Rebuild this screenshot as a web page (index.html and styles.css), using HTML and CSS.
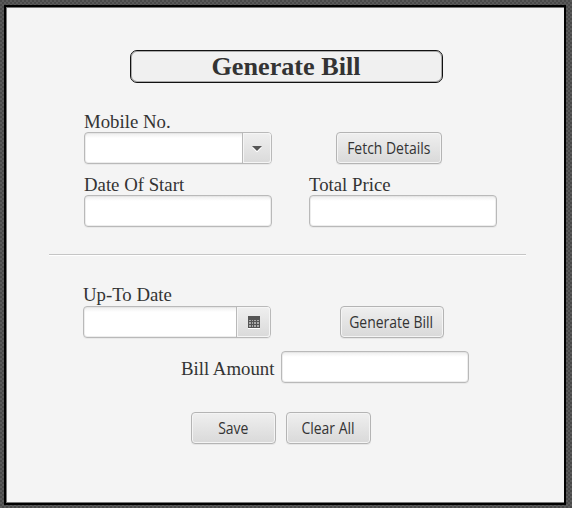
FILE: index.html
```html
<!DOCTYPE html>
<html lang="en">
<head>
<meta charset="utf-8">
<title>Generate Bill</title>
<link rel="stylesheet" href="styles.css">
</head>
<body>
<main class="window">
  <h1 class="title"><span>Generate Bill</span></h1>
  <section class="customer">
    <div class="field">
      <label for="mobile">Mobile No.</label>
      <div class="combo">
        <input id="mobile" class="combo-input" type="text">
        <button class="arrow" aria-label="Open list"><svg width="10" height="6" viewBox="0 0 10 6"><path d="M0 1.5h10L5 6.5z" fill="#fff"/><path d="M0 0h10L5 5z" fill="#555"/></svg></button>
      </div>
    </div>
    <button class="button fetch"><span>Fetch Details</span></button>
    <div class="field">
      <label for="start">Date Of Start</label>
      <input id="start" class="input" type="text">
    </div>
    <div class="field">
      <label for="price">Total Price</label>
      <input id="price" class="input" type="text">
    </div>
  </section>
  <hr class="separator">
  <section class="billing">
    <div class="field">
      <label for="upto">Up-To Date</label>
      <div class="combo">
        <input id="upto" class="combo-input" type="text">
        <button class="calendar" aria-label="Pick date"><svg width="12" height="13" viewBox="0 0 12 13" shape-rendering="crispEdges"><path d="M0 12h12v1H0z" fill="#fff"/><path d="M0 0h12v12H0z" fill="#555"/><path d="M1 4h2v1H1zM4 4h1v1H4zM6 4h2v1H6zM9 4h2v1H9zM1 6h2v2H1zM4 6h1v2H4zM6 6h2v2H6zM9 6h2v2H9zM1 9h2v2H1zM4 9h1v2H4zM6 9h2v2H6zM9 9h2v2H9z" fill="#aaa"/></svg></button>
      </div>
    </div>
    <button class="button generate"><span>Generate Bill</span></button>
  </section>
  <div class="amount">
    <label for="amount">Bill Amount</label>
    <input id="amount" class="input" type="text">
  </div>
  <div class="actions">
    <button class="button save"><span>Save</span></button>
    <button class="button clear"><span>Clear All</span></button>
  </div>
</main>
</body>
</html>
```
FILE: styles.css
```css
* { box-sizing: border-box; }
body {
  margin: 0;
  padding: 5px 6px 3px 4px;
  height: 508px;
  overflow: hidden;
  background: repeating-conic-gradient(#5a5a5a 0 25%, #494949 0 50%) 0 0 / 4px 4px;
}
.window {
  width: 562px;
  height: 500px;
  padding-top: 42px;
  border: 2px solid #000;
  background: #f4f4f4;
  box-shadow: inset 1px 1px #777, inset 0 -1px #777;
  color: #333;
  font-family: "Liberation Serif", serif;
  font-size: 18.8px;
}
.title {
  display: flex;
  align-items: center;
  justify-content: center;
  width: 313px;
  height: 33px;
  margin: 1px 0 0 124px;
  border: 1px solid #111;
  border-radius: 7px;
  background: #f0f0f0;
  box-shadow: inset 0 0 0 1px #aaa;
  font-size: 26.2px;
  line-height: 30px;
}
.title span { margin-left: -1px; }
.customer {
  display: grid;
  grid-template-columns: 188px 188px;
  column-gap: 37px;
  row-gap: 10px;
  align-items: end;
  margin: 28px 0 0 78px;
}
label { display: block; height: 21px; line-height: 21px; white-space: nowrap; }
.combo, .input {
  display: flex;
  width: 188px;
  height: 32px;
  border: 1px solid #b9b9b9;
  border-radius: 4px;
  background: linear-gradient(#ededed, #fff 5px);
  box-shadow: inset 0 0 0 1px #dddddd88, 0 1px #e9e9e9;
}
.input { display: block; padding: 0 8px; font: 16px "Open Sans", sans-serif; }
.combo-input { flex: 1; min-width: 0; border: 0; background: transparent; padding: 0 8px; }
.arrow, .calendar {
  display: flex;
  align-items: center;
  justify-content: center;
  width: 29px;
  padding: 0;
  border: 0;
  border-left: 1px solid #b9b9b9;
  border-radius: 0 3px 3px 0;
  background: linear-gradient(#efefef, #dadada);
  box-shadow: inset 0 0 0 1px #f5f5f5;
}
.arrow { padding-top: 2px; }
.calendar { width: 34px; padding-left: 1px; }
.button {
  height: 32px;
  padding: 0;
  border: 1px solid #b4b4b4;
  border-radius: 4px;
  background: linear-gradient(#efefef, #d9d9d9);
  box-shadow: inset 0 0 0 1px #f4f4f4, 0 1px #e6e6e6;
  color: #333;
  font: 15.5px "Open Sans", sans-serif;
  white-space: nowrap;
}
.button span { display: inline-block; margin: 0 -10px; transform: translateX(-.5px) scaleX(.9); }
.fetch { width: 106px; margin-left: 27px; }
.separator {
  width: 477px;
  height: 2px;
  margin: 27px 0 0 43px;
  border: 0;
  border-top: 1px solid #c5c5c5;
  background: #fff;
}
.billing { display: flex; align-items: flex-end; margin: 29px 0 0 77px; }
.billing label { height: 22px; }
.billing { margin-top: 28px; }
.generate { width: 104px; margin-left: 69px; }
.amount { display: flex; align-items: center; gap: 6px; margin: 13px 0 0 175px; }
.amount label { width: 94px; padding-top: 1px; }
.actions { display: flex; gap: 10px; margin: 29px 0 0 185px; }
.save, .clear { width: 85px; }
```
